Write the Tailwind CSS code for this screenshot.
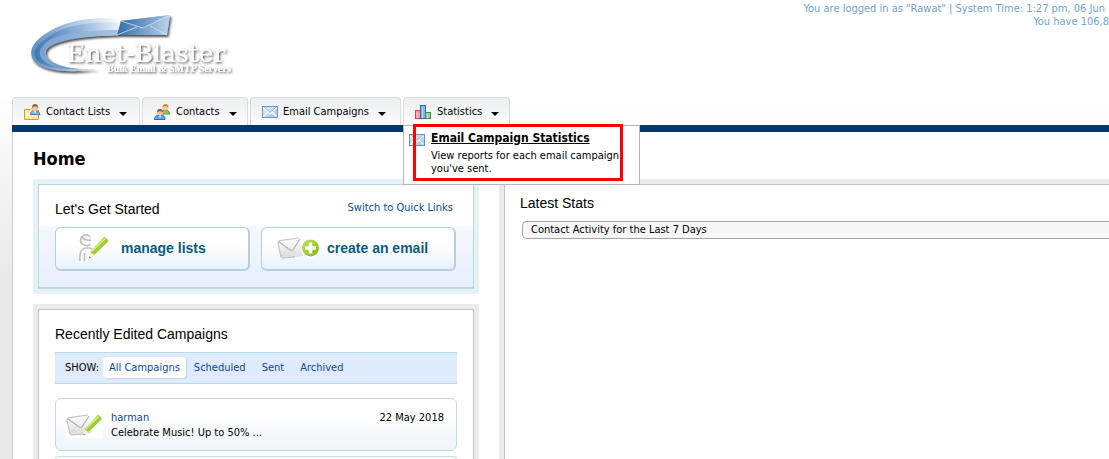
<!DOCTYPE html>
<html lang="en">
<head>
<meta charset="utf-8">
<title>Enet-Blaster - Home</title>
<script src="https://cdn.jsdelivr.net/npm/@tailwindcss/browser@4"></script>
</head>
<body class="min-h-screen overflow-hidden bg-white bg-linear-to-b from-white from-20% to-[#e9e9e9] to-60% font-['DejaVu_Sans_Condensed','DejaVu_Sans',sans-serif] text-[11px] leading-[13px] text-black">
<svg width="0" height="0" class="absolute" aria-hidden="true">
  <defs>
    <linearGradient id="env" x1="0" y1="0" x2="1" y2="1"><stop offset="0" stop-color="#e4effa"/><stop offset="1" stop-color="#9cc4ee"/></linearGradient>
    <linearGradient id="paper" x1="0" y1="0" x2="0" y2="1"><stop offset="0" stop-color="#fff"/><stop offset="1" stop-color="#dcdcdc"/></linearGradient>
    <linearGradient id="green" x1="0" y1="0" x2="1" y2="1"><stop offset="0" stop-color="#c5e255"/><stop offset="1" stop-color="#7fb51f"/></linearGradient>
    <symbol id="mail" viewBox="0 0 16 12"><rect x=".5" y=".5" width="15" height="11" fill="url(#env)" stroke="#6a94c8"/><path d="M1.500 1.500 8 7.500l6.500-6M1.500 10.500 6 6M14.500 10.500 10 6" fill="none" stroke="#fff" stroke-width="1.300"/><path d="M2 1.200 8 6.500l6-5.300" fill="none" stroke="#7ba6d8" stroke-width=".7"/></symbol>
    <symbol id="letter" viewBox="0 0 28 22"><path d="M1 5.500Q1 4 3 3.700L22 1q2-.2 2.300 1.500L26 17q.1 2-2 2.200L6 21q-2 .2-2.300-1.800Z" fill="url(#paper)"/><path d="M22 1 3 3.700Q1 4 1 5.500L3.700 19.200Q4 21.200 6 21l12-1.200" fill="none" stroke="#c4c4c4" stroke-width="1.200"/><path d="m2 5 12 8.500q1.300.6 2-.5L23 2" fill="none" stroke="#b0b0b0" stroke-width="1.100"/><path d="M4 20l7-8.500" fill="none" stroke="#d8d8d8"/></symbol>
    <symbol id="pencil" viewBox="0 0 22 23"><path d="M16.500 1q1-.8 2 0l2.700 3q.7 1-.2 2L7.500 19 2 22.500l1-6.500Z" fill="url(#green)" stroke="#fff" stroke-width=".6"/><path d="m3 16 4.500 3L2 22.500Z" fill="#eef3dc"/><path d="m2.400 20.300 1.700 1.300L2 22.500Z" fill="#688"/><path d="M4.500 15.500 18 2.500" stroke="#d9ee88" stroke-width="1.500"/></symbol>
  </defs>
</svg>

<header class="flex h-[97px] items-start justify-between bg-white">
  <a href="#" aria-label="Enet-Blaster" class="ml-7 mt-2">
    <svg width="210" height="72" viewBox="0 0 210 72">
      <defs>
        <linearGradient id="swoosh" x1="0" y1="0" x2="1" y2="0"><stop offset="0" stop-color="#5f8fc0"/><stop offset=".45" stop-color="#a9c5e2"/><stop offset="1" stop-color="#fdfeff"/></linearGradient>
        <linearGradient id="swoosh2" x1="0" y1="0" x2="1" y2="0"><stop offset="0" stop-color="#3f76b0"/><stop offset=".4" stop-color="#7ba4d0"/><stop offset="1" stop-color="#edf4fb"/></linearGradient>
        <linearGradient id="flap" x1="0" y1="0" x2="1" y2="0"><stop offset="0" stop-color="#3a70aa"/><stop offset="1" stop-color="#a5c3e2"/></linearGradient>
        <linearGradient id="body" x1="0" y1="0" x2="1" y2="0"><stop offset="0" stop-color="#356ca8"/><stop offset="1" stop-color="#bcd4ec"/></linearGradient>
        <filter id="sh" x="-10%" y="-10%" width="125%" height="135%"><feDropShadow dx="1.500" dy="2" stdDeviation=".9" flood-color="#222" flood-opacity=".8"/></filter>
        <filter id="tsh" x="-5%" y="-20%" width="112%" height="160%"><feDropShadow dx="1.200" dy="1.300" stdDeviation=".8" flood-color="#333" flood-opacity=".85"/></filter>
      </defs>
      <g filter="url(#sh)">
        <path d="M93 11C62 8 35 13 17 26 4 35-1 45 7 54c10 10 39 11 62 7-24 1-46-3-51-14C13 34 44 28 90 27Z" fill="url(#swoosh)"/>
        <path d="M93 15C60 13 35 18 20 29 7 38 3 46 10 53c9 8 30 9 44 8-19-1-34-5-37-14C13 34 44 28 90 27Z" fill="url(#swoosh2)"/>
        <path d="M23 31C12 38 9 45 14 51c4 5 12 8 20 9-9-3-14-7-16-13-3-12 25-18 72-20l1-5c-30 0-52 2-68 9Z" fill="#8db2d9" opacity=".7"/>
        <path d="M93 13 142 7l-3 20H89Z" fill="url(#body)"/>
        <path d="M93 13 142 7 116 20Z" fill="url(#flap)"/>
        <path d="m93 13 22 7 27-13M89 27l20-8M139 27l-17-9" fill="none" stroke="#dfeaf6" stroke-width=".7"/>
      </g>
      <text x="39" y="54" filter="url(#tsh)" font-family="DejaVu Serif" font-size="25" fill="#fff">Enet-Blaster</text>
      <text x="79" y="64" filter="url(#tsh)" font-family="Liberation Serif" font-size="10" font-weight="700" fill="#fff">Bulk Email &amp; SMTP Servers</text>
    </svg>
  </a>
  <p class="mt-[2px] whitespace-nowrap text-right text-[#6fa3d1]"><span class="mr-1">You are logged in as "Rawat" | System Time: 1:27 pm, 06 Jun</span><br>You have 106,8</p>
</header>

<nav class="relative z-10 ml-3 border-b-7 border-[#003768] bg-linear-to-b from-white to-[#fcfcfc]">
  <ul class="flex h-7 gap-[2px] leading-4">
    <li class="flex rounded-t border border-b-0 border-[#d8dcde] bg-linear-to-b from-[#eaeff1] to-[#fcfcfd]">
      <button class="flex w-[126px] items-center gap-[5px] pl-[11px]">
        <svg width="17" height="16" viewBox="0 0 17 16"><path d="M.5 5.500h6l1-1h4v2h3v9H.5Z" fill="#fde9a8" stroke="#dc9a34"/><path d="M2.500 9.500h5M2.500 11.500h3" stroke="#fff"/><path d="M6.500 10.500q0-4 4.500-4t5 4Z" fill="#7fb2ea" stroke="#4a7fc0"/><circle cx="11" cy="4" r="3" fill="#f2c59a"/><path d="M8 4q0-4 3-4t3.200 4q-1-1.700-3-1.700T8 4Z" fill="#9b5836"/><path d="M10 7h2l-1 3Z" fill="#fff"/></svg>
        <span>Contact Lists</span><svg class="ml-1 mt-1" width="8" height="4"><path d="M0 0h8L4 4Z"/></svg>
      </button>
    </li>
    <li class="flex rounded-t border border-b-0 border-[#d8dcde] bg-linear-to-b from-[#eaeff1] to-[#fcfcfd]">
      <button class="flex w-[104px] items-center gap-[5px] pl-[11px]">
        <svg width="17" height="16" viewBox="0 0 17 16"><path d="M7 10q0-4 4-4t5 4Z" fill="#8cc864" stroke="#579b3b"/><circle cx="11.500" cy="3.500" r="3" fill="#f4c99c"/><path d="M8.500 3.500q0-3.500 3-3.500t3 3.500q-1-1.500-3-1.500t-3 1.500Z" fill="#d58a28"/><path d="M.5 15.500q0-4.500 5.500-4.500t5 4.500Z" fill="#5b9ff0" stroke="#3069c2"/><circle cx="6" cy="8.500" r="3" fill="#f2bd90"/><path d="M3 8.500Q3 5 6 5t3 3.500Q8 7 6 7T3 8.500Z" fill="#8f4a32"/><path d="M5 11.500h2l-1 3Z" fill="#fff"/></svg>
        <span>Contacts</span><svg class="ml-1 mt-1" width="8" height="4"><path d="M0 0h8L4 4Z"/></svg>
      </button>
    </li>
    <li class="flex rounded-t border border-b-0 border-[#d8dcde] bg-linear-to-b from-[#eaeff1] to-[#fcfcfd]">
      <button class="flex w-[149px] items-center gap-[5px] pl-[11px]">
        <svg class="h-3 w-4"><use href="#mail"/></svg>
        <span>Email Campaigns</span><svg class="ml-1 mt-1" width="8" height="4"><path d="M0 0h8L4 4Z"/></svg>
      </button>
    </li>
    <li class="relative flex rounded-t border border-b-0 border-[#d8dcde] bg-linear-to-b from-[#eaeff1] to-[#fcfcfd]">
      <button class="flex w-[105px] items-center gap-[5px] pl-[11px]">
        <svg width="17" height="14" viewBox="0 0 17 14"><rect x=".5" y="5.500" width="5" height="8" fill="#f59a9a" stroke="#d64848"/><rect x="5.500" y=".5" width="5" height="13" fill="#7db4f2" stroke="#2c66b4"/><rect x="10.500" y="7.500" width="5" height="6" fill="#9cc99c" stroke="#458a55"/><path d="M2 7v6M7.500 2v11M12.500 9v4" stroke="#fff" stroke-opacity=".5"/></svg>
        <span>Statistics</span><svg class="ml-1 mt-1" width="8" height="4"><path d="M0 0h8L4 4Z"/></svg>
      </button>
      <div class="absolute left-[-1px] top-[27px] flex h-[60px] w-[237px] gap-[6px] border border-[#b5b5b5] bg-white pl-[5px] pt-1 leading-[13px]">
        <svg class="mt-1 h-3 w-4 shrink-0"><use href="#mail"/></svg>
        <div><a href="#" class="text-xs leading-4 font-bold underline">Email Campaign Statistics</a><p class="mt-[3px] w-[195px]">View reports for each email campaign you've sent.</p></div>
        <div class="absolute left-[9px] top-[-2px] h-[57px] w-[210px] border-3 border-[#fb0207]"></div>
      </div>
    </li>
  </ul>
</nav>

<main class="ml-3 min-h-[327px] border-l border-[#ccc] bg-white pl-5 pt-4">
  <h1 class="text-lg leading-[22px] font-bold">Home</h1>
  <div class="mt-[9px] flex items-stretch gap-5">
    <div class="flex w-[446px] shrink-0 flex-col gap-[10px]">
      <section class="border-5 border-[#e5f1f3]">
        <div class="border border-b-2 border-[#b9dadd] bg-linear-to-b from-white from-40% via-[#f4f7ff] via-41% to-[#e7effe] px-4 pt-4 pb-4">
          <div class="flex items-start justify-between">
            <h2 class="font-['Liberation_Sans',sans-serif] text-sm leading-4">Let's Get Started</h2>
            <a href="#" class="mr-1 text-[#0b4a94]">Switch to Quick Links</a>
          </div>
          <div class="mt-[10px] flex gap-[11px] font-['Liberation_Sans',sans-serif] text-sm font-bold text-[#0b5a80]">
            <button class="flex h-11 w-[195px] items-center rounded-md border border-r-2 border-b-2 border-[#b3cfe0] bg-linear-to-b from-white from-40% to-[#e8f1f9] pb-[2px] pl-[22px]">
              <svg width="32" height="30" viewBox="0 0 32 30"><path d="M2 28q-1-12 5-13h6q3 1 3 4l-3 9Z" fill="#fafafa"/><path d="M2 28q-1-12 5-13h5q3 1 3 4M6.500 28v-8" fill="none" stroke="#c2c2c2" stroke-width="1.700"/><circle cx="8" cy="7" r="5.500" fill="#f6f6f6"/><path d="M12.500 3.500Q8 0 4 3.500q-3 4 0 7.500 4 3 8.500.5M4 4q3 4 9 3" fill="none" stroke="#bcbcbc" stroke-width="1.500"/><use href="#pencil" x="9" y="3" width="22" height="23"/></svg>
              <span class="ml-[11px]">manage lists</span>
            </button>
            <button class="flex h-11 w-[195px] items-center rounded-md border border-r-2 border-b-2 border-[#b3cfe0] bg-linear-to-b from-white from-40% to-[#e8f1f9] pb-[2px] pl-[15px]">
              <svg width="44" height="26" viewBox="0 0 44 26"><use href="#letter" x="0" y="2" width="28" height="22"/><circle cx="33.500" cy="13" r="9.500" fill="#fff"/><circle cx="33.500" cy="13" r="8.500" fill="url(#green)"/><path d="M33.500 7.500v11M28 13h11" stroke="#fff" stroke-width="3.500"/></svg>
              <span class="ml-[6px]">create an email</span>
            </button>
          </div>
        </div>
      </section>
      <section class="border-5 border-b-0 border-[#ebebeb]">
        <div class="border border-b-0 border-[#c4c4c4] bg-white px-4 pt-4">
          <h2 class="font-['Liberation_Sans',sans-serif] text-sm leading-4">Recently Edited Campaigns</h2>
          <div class="mt-[10px] flex h-8 items-center border-y border-[#b5dce2] bg-[#dfeafd] pb-[2px] pl-[10px] text-[#0b4a94]">
            <span class="text-black">SHOW:</span>
            <a href="#" class="ml-1 rounded bg-white px-[6px] py-1 shadow-[1px_1px_1px_#c8d6ee]">All Campaigns</a>
            <a href="#" class="ml-2">Scheduled</a>
            <a href="#" class="ml-4">Sent</a>
            <a href="#" class="ml-4">Archived</a>
          </div>
          <ul class="mt-[14px] flex flex-col gap-[5px]">
            <li class="flex h-[53px] items-center rounded-md border border-[#c2dae4] bg-linear-to-b from-white from-30% to-[#edf4fa] pr-3 pl-[10px]">
              <svg width="37" height="26" viewBox="0 0 37 26"><rect width="37" height="26" fill="#fff"/><use href="#letter" x="0" y="2" width="28" height="22"/><use href="#pencil" x="15" y="2" width="22" height="22"/></svg>
              <div class="ml-2 leading-[15px]"><a href="#" class="text-[#0b4a94]">harman</a><p>Celebrate Music! Up to 50% ...</p></div>
              <time class="ml-auto self-start pt-3">22 May 2018</time>
            </li>
            <li class="h-[4px] rounded-t-md border border-b-0 border-[#c2dae4] bg-white"></li>
          </ul>
        </div>
      </section>
    </div>
    <section class="min-w-0 flex-1 border-t-5 border-l-5 border-[#ebebeb]">
      <div class="h-full border-t border-l border-[#c4c4c4] bg-white pt-[10px] pl-[15px]">
        <h2 class="font-['Liberation_Sans',sans-serif] text-sm leading-4">Latest Stats</h2>
        <select aria-label="Latest stats report" class="ml-[2px] mt-[10px] block h-[18px] w-full appearance-none rounded-l-[5px] border border-r-0 border-[#a3a3a3] bg-[#f7f7f7] pl-2 leading-4"><option>Contact Activity for the Last 7 Days</option></select>
      </div>
    </section>
  </div>
</main>
</body>
</html>
